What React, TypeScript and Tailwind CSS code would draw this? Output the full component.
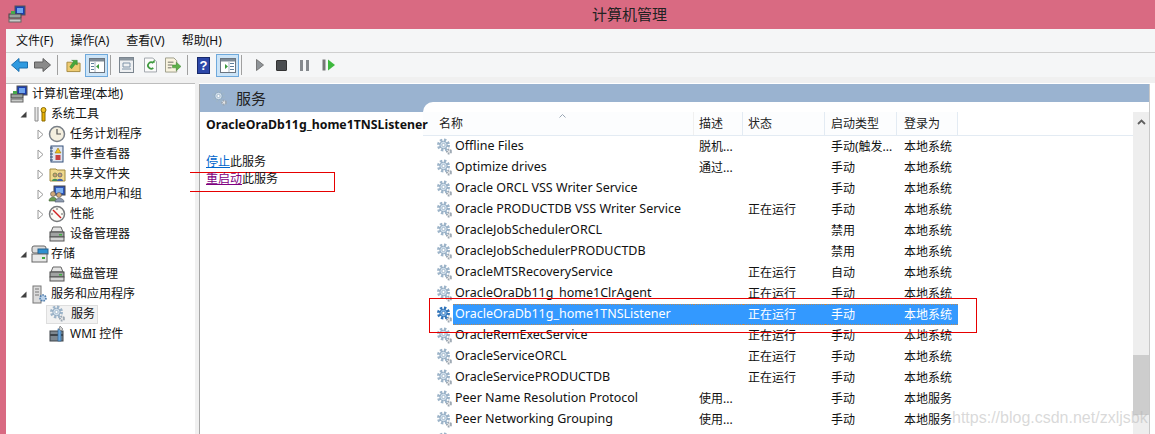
import type { ReactNode } from "react";

const Gear = ({ dark = false }: { dark?: boolean }) => {
  const teeth = dark ? "#2f74bb" : "#9db4c9";
  const body = dark ? "#7db6ee" : "#d6e3ee";
  const rim = dark ? "#1f5e9e" : "#7f9cb6";
  return (
    <svg width="16" height="18" viewBox="0 0 16 18" className="shrink-0">
      <circle cx="12" cy="13.500" r="2" fill="#e8e8e8" stroke="#9ca7b2" strokeWidth="2" strokeDasharray="1.500 .9" />
      <circle cx="6.500" cy="7" r="5" fill="none" stroke={teeth} strokeWidth="3" strokeDasharray="2.300 1.600" />
      <circle cx="6.500" cy="7" r="3.700" fill={body} stroke={rim} strokeWidth=".8" />
      <circle cx="6.500" cy="7" r="1.600" fill="#fff" stroke={rim} strokeWidth=".6" />
    </svg>
  );
};

const Computer = () => (
  <svg width="18" height="18" viewBox="0 0 18 18" className="shrink-0">
    <rect x="7" y="1" width="10" height="9" fill="#1c3fb0" stroke="#555" />
    <rect x="9" y="3" width="6" height="5" fill="#6fa4ee" />
    <rect x="1" y="9" width="12" height="4" fill="#9aa09c" stroke="#444" />
    <rect x="1" y="14" width="12" height="3" fill="#c8cac8" stroke="#666" />
    <rect x="3" y="6" width="4" height="3" fill="#46a84a" />
  </svg>
);

const Tools = () => (
  <svg width="16" height="18" viewBox="0 0 16 18" className="shrink-0">
    <path d="M3 2v14h3V2" fill="#e8e8e8" stroke="#8a8a8a" />
    <path d="M10 7h3v9h-3z" fill="#e8b000" stroke="#8a6a00" />
    <circle cx="11.500" cy="5" r="2.500" fill="#f0c020" stroke="#8a6a00" />
  </svg>
);

const Clock = () => (
  <svg width="18" height="18" viewBox="0 0 18 18" className="shrink-0">
    <circle cx="9" cy="9" r="7.500" fill="#f4efdf" stroke="#7a8088" strokeWidth="1.500" />
    <path d="M9 4v5h4" fill="none" stroke="#555" strokeWidth="1.200" />
  </svg>
);

const EventLog = () => (
  <svg width="16" height="18" viewBox="0 0 16 18" className="shrink-0">
    <rect x="2" y="1" width="12" height="16" fill="#dfe6f2" stroke="#34507a" />
    <path d="M1 3h3M1 6h3M1 9h3M1 12h3M1 15h3" stroke="#34507a" />
    <path d="M9 3l3 5H6z" fill="#f0c020" stroke="#8a6a00" strokeWidth=".5" />
    <rect x="6.500" y="10" width="5" height="5" fill="#c84040" />
  </svg>
);

const SharedFolder = () => (
  <svg width="17" height="18" viewBox="0 0 17 18" className="shrink-0">
    <path d="M1 4h6l1 1h8v11H1z" fill="#f0d98e" stroke="#a08a40" />
    <circle cx="6" cy="10" r="2" fill="#c9a070" stroke="#4a6a40" strokeWidth=".6" />
    <path d="M3 16c0-3 6-3 6 0z" fill="#3f8f55" />
    <circle cx="11" cy="10" r="2" fill="#c9a070" stroke="#3a4a70" strokeWidth=".6" />
    <path d="M8 16c0-3 6-3 6 0z" fill="#3d5fa8" />
  </svg>
);

const Users = () => (
  <svg width="18" height="18" viewBox="0 0 18 18" className="shrink-0">
    <rect x="6" y="1" width="11" height="9" fill="#2d55bb" stroke="#444" />
    <rect x="8" y="3" width="7" height="5" fill="#7db0f0" />
    <circle cx="5" cy="9" r="2.500" fill="#d0a878" stroke="#555" strokeWidth=".6" />
    <path d="M1 16c0-5 8-5 8 0z" fill="#6a9a52" stroke="#3e5f30" strokeWidth=".6" />
    <circle cx="11" cy="10" r="2.500" fill="#d0a878" stroke="#555" strokeWidth=".6" />
    <path d="M7 17c0-5 9-5 9 0z" fill="#8c9bb0" stroke="#4a5568" strokeWidth=".6" />
  </svg>
);

const Gauge = () => (
  <svg width="18" height="18" viewBox="0 0 18 18" className="shrink-0">
    <circle cx="9" cy="9" r="7.500" fill="#fbfaf4" stroke="#77797c" strokeWidth="1.500" />
    <path d="M5 5l8 8" stroke="#d02020" strokeWidth="1.500" />
    <path d="M9 3v2M3 9h2M13 9h2" stroke="#666" />
  </svg>
);

const Printerish = () => (
  <svg width="16" height="18" viewBox="0 0 16 18" className="shrink-0">
    <path d="M4 2h8l2 5H2z" fill="#e4e4e4" stroke="#666" />
    <rect x="1" y="7" width="14" height="5" fill="#a0a2a2" stroke="#444" />
    <rect x="1" y="12" width="14" height="4" fill="#d4d4d4" stroke="#555" />
    <rect x="10" y="9" width="3" height="1.500" fill="#40b040" />
  </svg>
);

const Storage = () => (
  <svg width="18" height="18" viewBox="0 0 18 18" className="shrink-0">
    <rect x="1" y="1" width="14" height="7" rx="2" fill="#dcdcdc" stroke="#666" />
    <rect x="7" y="4" width="10" height="5" fill="#2f8fd0" stroke="#26628e" />
    <rect x="1" y="9" width="15" height="8" fill="#e8e8e8" stroke="#666" />
    <rect x="11" y="12" width="3" height="2" fill="#40a840" />
  </svg>
);

const ServerGear = () => (
  <svg width="16" height="19" viewBox="0 0 16 19" className="shrink-0">
    <rect x="1" y="1" width="8" height="17" fill="#dcdcdc" stroke="#777" />
    <path d="M3 4h4M3 7h4M3 10h4" stroke="#777" />
    <circle cx="11" cy="13" r="3" fill="#bcd3ea" stroke="#4f7cac" strokeWidth="1.600" strokeDasharray="1.600 1" />
  </svg>
);

const Wmi = () => (
  <svg width="16" height="18" viewBox="0 0 16 18" className="shrink-0">
    <rect x="1" y="6" width="13" height="10" fill="#7d8790" stroke="#3e444a" />
    <rect x="1" y="9" width="13" height="2" fill="#3e444a" />
    <rect x="9" y="4" width="3" height="12" fill="#6aa6dc" stroke="#2d6598" strokeWidth=".7" />
    <path d="M11 1l3 3-2 2-2-2z" fill="#cfcfcf" stroke="#666" strokeWidth=".6" />
  </svg>
);

const treeRows: { label: string; indent: number; gap: number; arrow?: "open" | "closed"; icon: ReactNode; selected?: boolean }[] = [
  { label: "计算机管理(本地)", indent: 4, gap: 4, icon: <Computer /> },
  { label: "系统工具", indent: 25, gap: 2, arrow: "open", icon: <Tools /> },
  { label: "任务计划程序", indent: 42, gap: 4, arrow: "closed", icon: <Clock /> },
  { label: "事件查看器", indent: 42, gap: 4, arrow: "closed", icon: <EventLog /> },
  { label: "共享文件夹", indent: 42, gap: 4, arrow: "closed", icon: <SharedFolder /> },
  { label: "本地用户和组", indent: 42, gap: 4, arrow: "closed", icon: <Users /> },
  { label: "性能", indent: 42, gap: 4, arrow: "closed", icon: <Gauge /> },
  { label: "设备管理器", indent: 42, gap: 4, icon: <Printerish /> },
  { label: "存储", indent: 25, gap: 2, arrow: "open", icon: <Storage /> },
  { label: "磁盘管理", indent: 42, gap: 4, icon: <Printerish /> },
  { label: "服务和应用程序", indent: 25, gap: 2, arrow: "open", icon: <ServerGear /> },
  { label: "服务", indent: 42, gap: 4, icon: <Gear />, selected: true },
  { label: "WMI 控件", indent: 42, gap: 4, icon: <Wmi /> },
];

const services = [
  ["Offline Files", "脱机...", "", "手动(触发...", "本地系统"],
  ["Optimize drives", "通过...", "", "手动", "本地系统"],
  ["Oracle ORCL VSS Writer Service", "", "", "手动", "本地系统"],
  ["Oracle PRODUCTDB VSS Writer Service", "", "正在运行", "手动", "本地系统"],
  ["OracleJobSchedulerORCL", "", "", "禁用", "本地系统"],
  ["OracleJobSchedulerPRODUCTDB", "", "", "禁用", "本地系统"],
  ["OracleMTSRecoveryService", "", "正在运行", "自动", "本地系统"],
  ["OracleOraDb11g_home1ClrAgent", "", "正在运行", "手动", "本地系统"],
  ["OracleOraDb11g_home1TNSListener", "", "正在运行", "手动", "本地系统"],
  ["OracleRemExecService", "", "正在运行", "手动", "本地系统"],
  ["OracleServiceORCL", "", "正在运行", "手动", "本地系统"],
  ["OracleServicePRODUCTDB", "", "正在运行", "手动", "本地系统"],
  ["Peer Name Resolution Protocol", "使用...", "", "手动", "本地服务"],
  ["Peer Networking Grouping", "使用...", "", "手动", "本地服务"],
];

const Sep = () => <div className="w-px h-[20px] bg-[#a0a0a0] mx-[1px] shrink-0" />;

const ToolBox = ({ children }: { children: ReactNode }) => (
  <div className="w-[23px] h-[23px] flex items-center justify-center bg-[#cce4f7] border border-[#6ea9dc] shrink-0">
    {children}
  </div>
);

const PaneIcon = ({ right = false }: { right?: boolean }) => (
  <svg width="16" height="15" viewBox="0 0 16 15">
    <rect x=".5" y=".5" width="15" height="14" fill="#fff" stroke="#6b7580" />
    <rect x="1" y="1" width="14" height="2.500" fill="#7f8b96" />
    <path d={right ? "M10 5h4v1h-4zM10 8h4v1h-4zM10 11h4v1h-4z" : "M2 5h3v1H2zM2 8h3v1H2zM2 11h3v1H2z"} fill="#5f7f9c" />
    <path d={right ? "M5 6l3 2.500L5 11z" : "M10 6L7 8.500 10 11z"} fill="#3c9a3c" />
    <path d={right ? "M9 4v10" : "M6 4v10"} stroke="#a9b6c2" />
  </svg>
);

const Toolbar = () => (
  <div className="h-[24px] flex items-center bg-[#f5f6f7] pl-[5px] shrink-0">
    <svg width="17" height="14" viewBox="0 0 17 14" className="mr-[6px]">
      <path d="M8 .5L.5 7 8 13.500V10h8.500V4H8z" fill="#2f9ae0" stroke="#1b6fae" />
    </svg>
    <svg width="17" height="14" viewBox="0 0 17 14" className="mr-[5px]">
      <path d="M9 .5L16.500 7 9 13.500V10H.5V4H9z" fill="#8a8a8a" stroke="#5e5e5e" />
    </svg>
    <Sep />
    <svg width="15" height="16" viewBox="0 0 16 16" className="ml-[7px] mr-[4px]">
      <path d="M1 5h5l1 1h8v9H1z" fill="#eecb72" stroke="#a58a3e" />
      <path d="M4 10l4-6-2-1h6v5l-2-1-4 5z" fill="#46a83c" stroke="#2f7a28" strokeWidth=".5" />
    </svg>
    <ToolBox>
      <PaneIcon />
    </ToolBox>
    <div className="w-px" />
    <Sep />
    <svg width="15" height="16" viewBox="0 0 15 16" className="ml-[7px] mr-[10px]">
      <rect x=".5" y=".5" width="14" height="15" fill="#eef0f2" stroke="#7b858f" />
      <rect x="1" y="1" width="13" height="2.500" fill="#8b96a0" />
      <path d="M4 6h7v4H4zM3 12h9" fill="none" stroke="#7f93a8" />
    </svg>
    <svg width="13" height="16" viewBox="0 0 14 16" className="mr-[8px]">
      <path d="M.5.5h9l4 4v11H.5z" fill="#fbfbfb" stroke="#9aa0a6" />
      <path d="M10 11a3.400 3.400 0 1 1 0-5" fill="none" stroke="#3f9a3f" strokeWidth="1.800" />
      <path d="M8 5.500h3.500V2z" fill="#3f9a3f" />
    </svg>
    <svg width="16" height="16" viewBox="0 0 17 16" className="mr-[5px]">
      <path d="M.5.5h9l3 3v12H.5z" fill="#f8f3df" stroke="#9a9a88" />
      <path d="M3 5h6M3 8h5M3 11h4" stroke="#6a6a60" />
      <path d="M8 8h4V5l5 4.500-5 4.500V11H8z" fill="#5db24a" stroke="#3c7e2f" strokeWidth=".5" />
    </svg>
    <Sep />
    <div className="ml-[8px] mr-[6px] w-[13px] h-[17px] bg-[#2c47a8] border border-[#16286b] flex items-center justify-center text-white text-[13px] font-bold leading-none font-['Liberation_Sans',sans-serif]">
      ?
    </div>
    <ToolBox>
      <PaneIcon right />
    </ToolBox>
    <div className="w-px" />
    <Sep />
    <svg width="8" height="12" viewBox="0 0 8 12" className="ml-[13px] mr-[12px]">
      <path d="M.5.5l7 5.500-7 5.500z" fill="#8f9498" stroke="#777" />
    </svg>
    <div className="w-[11px] h-[11px] bg-[#4a4d50] border border-[#333] rounded-[1px] mr-[13px]" />
    <div className="w-[9px] h-[11px] flex justify-between mr-[13px]">
      <div className="w-[3px] bg-[#85898d]" />
      <div className="w-[3px] bg-[#85898d]" />
    </div>
    <svg width="13" height="12" viewBox="0 0 13 12">
      <rect x=".5" y=".5" width="3" height="11" fill="#777" />
      <path d="M6 .5l7 5.500-7 5.500z" fill="#3db83d" />
    </svg>
  </div>
);

const TreeRow = ({ row }: { row: (typeof treeRows)[number] }) => (
  <div className="h-[20px] flex items-center" style={{ paddingLeft: row.indent }}>
    <span className="w-[0px] flex items-center relative">
      {row.arrow === "open" && (
        <svg width="7" height="7" viewBox="0 0 7 7" className="absolute -left-[11px]">
          <path d="M6.500.5v6H.5z" fill="#404040" />
        </svg>
      )}
      {row.arrow === "closed" && (
        <svg width="7" height="11" viewBox="0 0 7 11" className="absolute -left-[11px]">
          <path d="M1 1l5 4.500-5 4.500z" fill="#fff" stroke="#9a9a9a" />
        </svg>
      )}
    </span>
    <span
      className={
        row.selected
          ? "flex items-center h-[19px] ml-[-2px] pl-[2px] pr-[2px] bg-[#f2f2f2] border border-[#dedede] text-[12px] text-[#111]"
          : "flex items-center text-[12px] text-[#111] whitespace-nowrap"
      }
    >
      <span className="w-[18px] flex justify-center shrink-0">{row.icon}</span>
      <span style={{ marginLeft: row.gap }}>{row.label}</span>
    </span>
  </div>
);

const columns = "grid grid-cols-[271px_49px_82px_72px_61px]";

const ServiceList = () => (
  <div className="flex-1 flex bg-white rounded-tl-[10px] overflow-hidden min-w-0">
    <div className="w-[710px] pt-[10px] relative">
      <div className={`${columns} h-[24px] border-b border-[#e3ebf3] text-[12px] text-[#222]`}>
        {["名称", "描述", "状态", "启动类型", "登录为"].map((h, i) => (
          <div
            key={h}
            className={`flex items-center border-r border-[#e3ebf3] bg-[#fcfdfe] ${
              i === 0 ? "pl-[16px] border-r-[#f0f0f0]" : i === 3 ? "pl-[6px]" : i === 4 ? "pl-[7px]" : "pl-[5px]"
            }`}
          >
            {h}
          </div>
        ))}
      </div>
      <svg width="7" height="4" viewBox="0 0 7 4" className="absolute left-[136px] top-[12px]">
        <path d="M3.500.5L6.500 3.500M3.500.5L.5 3.500" stroke="#9aa7b4" fill="none" />
      </svg>
      {services.map((s) => {
        const selected = s[0] === "OracleOraDb11g_home1TNSListener";
        const cell = selected
          ? "bg-[#3399ff] text-white border-y border-dotted border-[#b98a55] h-[21px] flex items-center"
          : "h-[21px] flex items-center text-[#111]";
        return (
          <div key={s[0]} className={`${columns} h-[21px] text-[12px]`}>
            <div className="flex items-center pl-[14px]">
              <Gear dark={selected} />
              <div className={`${cell} flex-1 pl-[2px] text-[12.500px] whitespace-nowrap`}>{s[0]}</div>
            </div>
            <div className={`${cell} pl-[5px]`}>{s[1]}</div>
            <div className={`${cell} pl-[5px]`}>{s[2]}</div>
            <div className={`${cell} pl-[6px] whitespace-nowrap`}>{s[3]}</div>
            <div className={`${cell} pl-[7px]`}>{s[4]}</div>
          </div>
        );
      })}
      <div className="pl-[14px] h-[21px] flex items-center">
        <Gear />
      </div>
    </div>
    <div className="w-[16px] mt-[10px] ml-auto bg-[#eeeeee] flex flex-col items-center shrink-0">
      <svg width="9" height="6" viewBox="0 0 9 6" className="mt-[7px]">
        <path d="M1 5l3.500-3.500L8 5" fill="none" stroke="#606060" strokeWidth="1.800" />
      </svg>
      <div className="mt-auto mb-[19px] w-full h-[60px] bg-[#cdcdcd]" />
    </div>
  </div>
);

export default function App() {
  return (
    <div className="w-[1155px] h-[434px] overflow-hidden relative bg-[#d96a82] font-['Noto_Sans','Noto_Sans_CJK_SC',sans-serif]">
      {/* title bar */}
      <div className="h-[29px] relative flex items-center justify-center text-[15px] text-[#222] pl-[104px]">
        <div className="absolute left-[8px] top-[5px]">
          <Computer />
        </div>
        计算机管理
      </div>

      <div className="ml-[6px] h-[405px] bg-white flex flex-col">
        <div className="h-[24px] bg-[#f5f6f7] border-b border-[#cfcfcf] flex items-center pl-[10px] gap-[17px] text-[12px] text-[#111] shrink-0">
          <span>文件(F)</span>
          <span>操作(A)</span>
          <span>查看(V)</span>
          <span>帮助(H)</span>
        </div>
        <Toolbar />
        <div className="h-[6px] bg-[#f0f0f0] shrink-0" />

        <div className="flex-1 flex min-h-0 bg-white">
          <div className="w-[189px] shrink-0 bg-white border-t border-[#bdbdbd]">
            {treeRows.map((row) => (
              <TreeRow key={row.label} row={row} />
            ))}
          </div>
          <div className="w-[4px] shrink-0 bg-[#f0f0f0]" />
          <div className="flex-1 flex flex-col min-w-0 border-l border-[#a8a8a8] mt-[1px]">
            <div className="flex-1 flex min-h-0 mr-[5px] bg-white border-r border-[#c8c8c8]">
              <div className="w-[223px] shrink-0 flex flex-col relative z-10">
                <div className="h-[28px] bg-[#9ab3d0] flex items-center pl-[12px] gap-[8px] text-[15px] text-[#222] shrink-0">
                  <Gear />
                  服务
                </div>
                <div className="pl-[6px] pt-[4px] whitespace-nowrap text-[#111]">
                  <div className="text-[12.300px] font-bold leading-[18px]">OracleOraDb11g_home1TNSListener</div>
                  <div className="mt-[19px] text-[12px] leading-[17px]">
                    <span className="text-[#0066cc] underline">停止</span>此服务
                  </div>
                  <div className="text-[12px] leading-[17px]">
                    <span className="text-[#800080] underline">重启动</span>此服务
                  </div>
                </div>
              </div>
              <div className="flex-1 min-w-0 flex flex-col bg-[#9ab3d0] pt-[18px]">
                <ServiceList />
              </div>
            </div>
          </div>
        </div>
      </div>

      {/* annotations drawn over the screenshot */}
      <div className="absolute left-[190px] top-[172px] w-[145px] h-[20px] border border-l-0 border-[#e60000]" />
      <div className="absolute left-[429px] top-[298px] w-[548px] h-[35px] border border-[#e60000]" />
      <div className="absolute left-[952px] top-[406px] text-[16px] text-[#b4b4b4]/50 font-['Liberation_Sans',sans-serif] whitespace-nowrap">
        https://blog.csdn.net/zxljsbk
      </div>
    </div>
  );
}
